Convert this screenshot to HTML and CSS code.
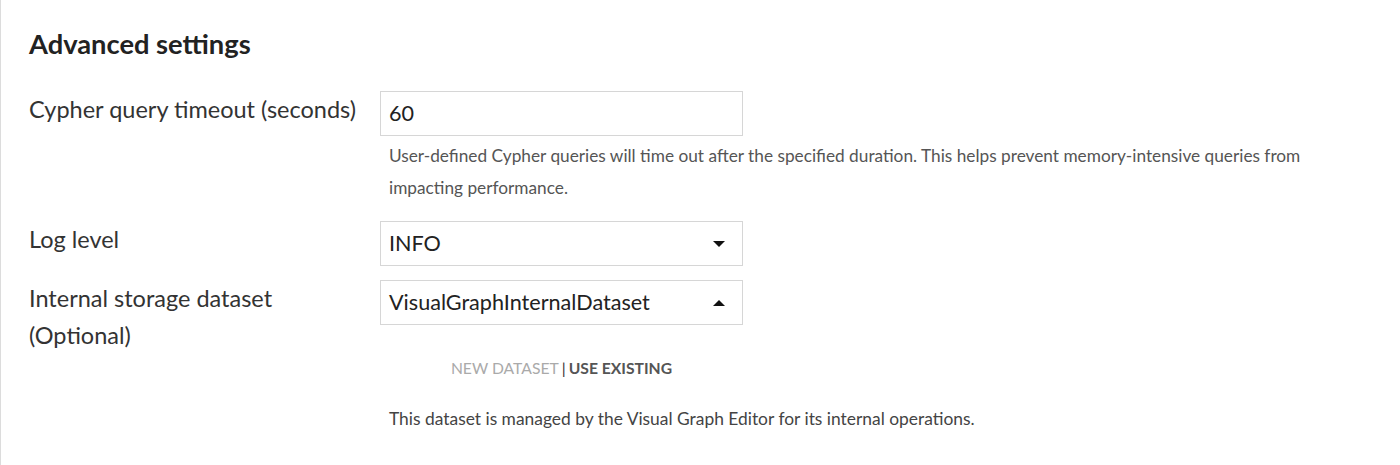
FILE: index.html
```html
<!DOCTYPE html>
<html>
<head>
<meta charset="utf-8">
<link rel="stylesheet" href="styles.css">
</head>
<body>
<div class="panel">
  <h2 class="title">Advanced settings</h2>
  <div class="row">
    <label class="label">Cypher query timeout (seconds)</label>
    <div class="control">
      <div class="field">60</div>
    </div>
  </div>
  <div class="row no-gap">
    <div></div>
    <p class="help">User-defined Cypher queries will time out after the specified duration. This helps prevent memory-intensive queries from impacting performance.</p>
  </div>
  <div class="row row-log">
    <label class="label">Log level</label>
    <div class="control">
      <div class="field select"><span>INFO</span><span class="caret down"></span></div>
    </div>
  </div>
  <div class="row row-ds">
    <label class="label">Internal storage dataset<br>(Optional)</label>
    <div class="control">
      <div class="field select"><span>VisualGraphInternalDataset</span><span class="caret up"></span></div>
      <div class="toggle"><span class="off">NEW DATASET</span><span class="sep">|</span><span class="on">USE EXISTING</span></div>
      <p class="note">This dataset is managed by the Visual Graph Editor for its internal operations.</p>
    </div>
  </div>
</div>
</body>
</html>
```

FILE: styles.css
```css
html, body {
  margin: 0;
  padding: 0;
  background: #fff;
}
body {
  font-family: Lato, "Liberation Sans", sans-serif;
  color: #333;
}
.panel {
  border-left: 1px solid #dcdcdc;
  min-height: 465px;
  box-sizing: border-box;
  padding: 27px 0 0 28px;
}
.title {
  margin: 0;
  font-size: 27.3px;
  line-height: 34px;
  font-weight: 700;
  color: #222;
}
.row {
  display: grid;
  grid-template-columns: 351px 363px;
  margin-top: 30px;
}
.row.no-gap {
  margin-top: 0;
  grid-template-columns: 351px 940px;
}
.row-log { margin-top: 17px; }
.row-ds { margin-top: 14px; }
.label {
  font-size: 23.5px;
  line-height: 37px;
  color: #333;
}
.field {
  box-sizing: border-box;
  height: 45px;
  border: 1px solid #d6d6d6;
  padding: 0 8px;
  font-size: 21.6px;
  line-height: 43px;
  color: #222;
}
.select {
  display: flex;
  justify-content: space-between;
  align-items: center;
  padding-right: 17px;
}
.caret {
  width: 0;
  height: 0;
  border-left: 6px solid transparent;
  border-right: 6px solid transparent;
}
.caret.down { border-top: 6px solid #111; }
.caret.up { border-bottom: 6px solid #111; }
.help {
  margin: 4px 0 0 9px;
  font-size: 17.25px;
  line-height: 32px;
  color: #555;
}
.toggle {
  margin-top: 32px;
  text-align: center;
  font-size: 15.7px;
  line-height: 22px;
}
.toggle .off { color: #aaa; }
.toggle .sep { color: #333; margin: 0 3px; }
.toggle .on { color: #555; font-weight: 700; }
.note {
  margin: 29px 0 0 9px;
  white-space: nowrap;
  font-size: 17.4px;
  line-height: 22px;
  color: #444;
}
```
